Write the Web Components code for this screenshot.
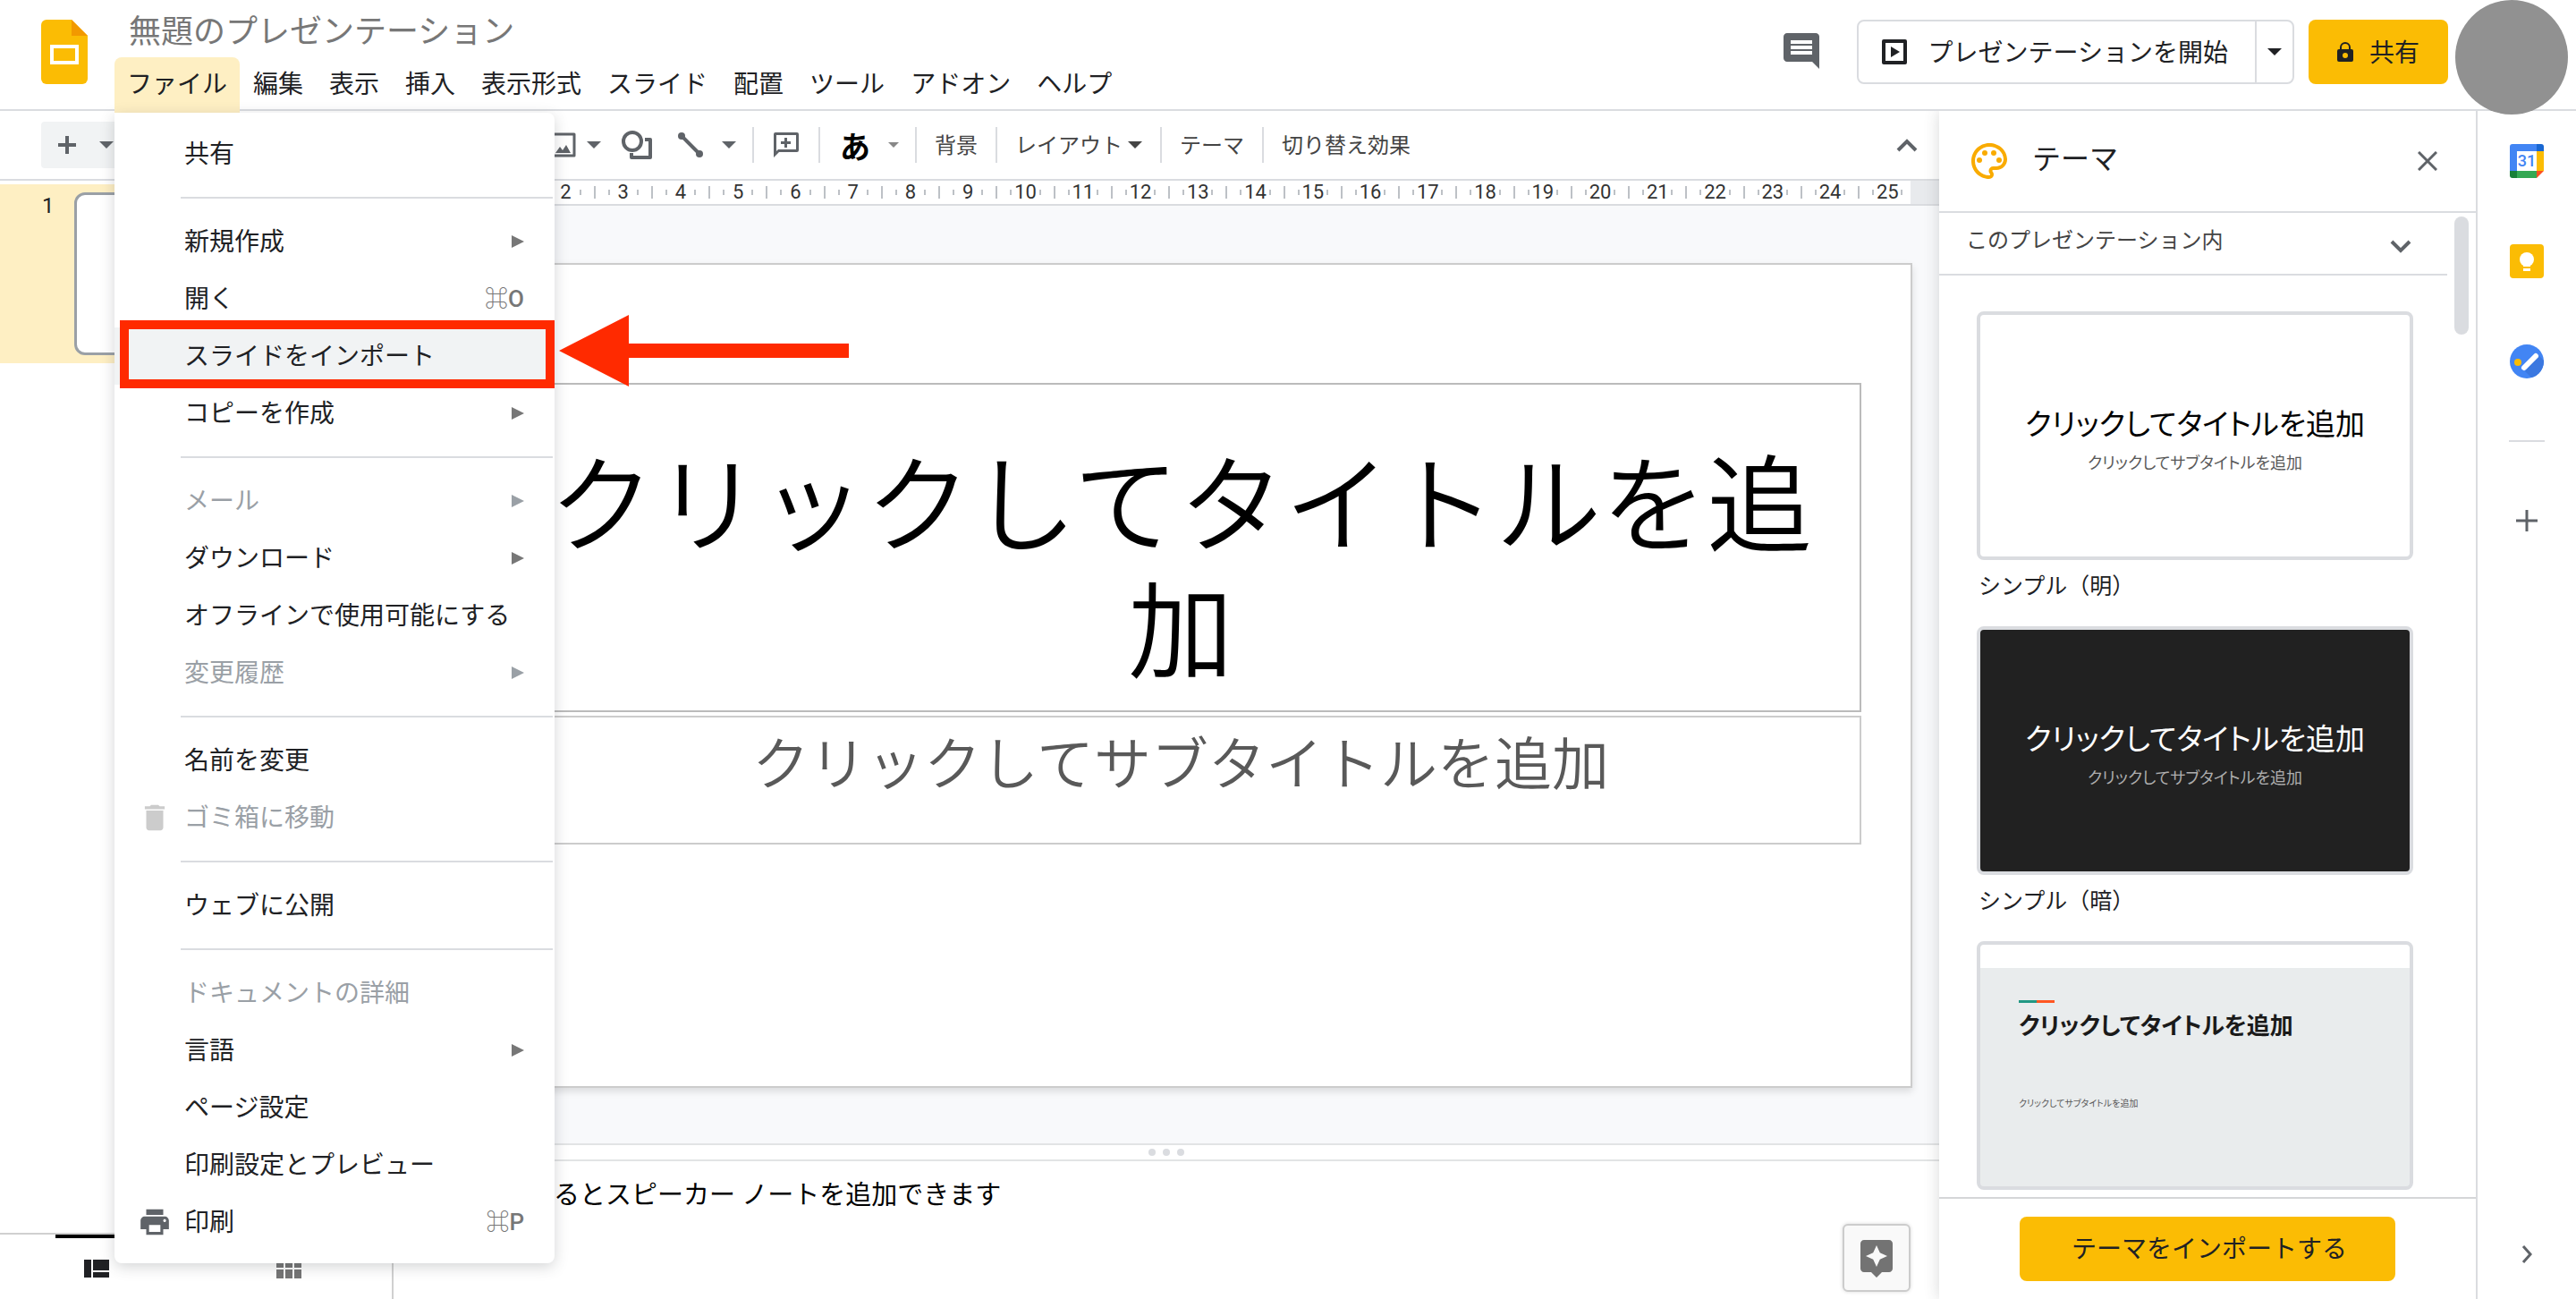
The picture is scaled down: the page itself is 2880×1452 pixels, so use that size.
<!DOCTYPE html>
<html lang="ja">
<head>
    <meta charset="utf-8">
    <meta name="viewport" content="width=device-width, initial-scale=1">
    <title>無題のプレゼンテーション</title>
    <style>
        body {
            margin: 0;
            font-family: Roboto, "Noto Sans CJK JP", sans-serif;
            font-size: 28px;
            color: #202124;
            background: #fff;
        }
    </style>
</head>
<body>
    <slides-app></slides-app>

    <script>
        const ICONS = {
            logo: ['0 0 52 72', '<path fill="#fbbc04" d="M6 0h28l18 18v48a6 6 0 0 1-6 6H6a6 6 0 0 1-6-6V6a6 6 0 0 1 6-6z"/><path fill="#f29900" d="M34 0l18 18H34z"/><path fill="none" stroke="#fff" stroke-width="4" d="M12 30h28v18H12z"/>'],
            comment: ['0 0 24 24', '<path d="M20 2H4c-1.1 0-2 .9-2 2v12c0 1.1.9 2 2 2h14l4 4V4c0-1.1-.9-2-2-2zm-2 12H6v-2h12v2zm0-3H6V9h12v2zm0-3H6V6h12v2z"/>'],
            present: ['0 0 28 28', '<path fill="none" stroke="currentColor" stroke-width="4" stroke-linejoin="round" d="M2 2h24v24H2z"/><path d="M10 8l10 6-10 6z"/>'],
            lock: ['0 0 18 22', '<path fill="none" stroke="currentColor" stroke-width="2" d="M4 9V6a5 5 0 0 1 10 0v3"/><path fill-rule="evenodd" d="M2 8h14a2 2 0 0 1 2 2v10a2 2 0 0 1-2 2H2a2 2 0 0 1-2-2V10a2 2 0 0 1 2-2zm7 4a3 3 0 1 0 0 6 3 3 0 0 0 0-6z"/>'],
            palette: ['0 0 24 24', '<path d="M12 22C6.49 22 2 17.51 2 12S6.49 2 12 2s10 4.04 10 9c0 3.31-2.69 6-6 6h-1.77c-.28 0-.5.22-.5.5 0 .12.05.23.13.33.41.47.64 1.06.64 1.67A2.5 2.5 0 0 1 12 22zm0-18c-4.41 0-8 3.59-8 8s3.59 8 8 8c.28 0 .5-.22.5-.5a.54.54 0 0 0-.14-.35c-.41-.46-.63-1.05-.63-1.65a2.5 2.5 0 0 1 2.5-2.5H16c2.21 0 4-1.79 4-4 0-3.86-3.59-7-8-7z"/><circle cx="6.5" cy="11.5" r="1.5"/><circle cx="9.5" cy="7.5" r="1.5"/><circle cx="14.5" cy="7.5" r="1.5"/><circle cx="17.5" cy="11.5" r="1.5"/>'],
            trash: ['0 0 24 24', '<path d="M6 19c0 1.1.9 2 2 2h8c1.1 0 2-.9 2-2V7H6v12zM19 4h-3.5l-1-1h-5l-1 1H5v2h14V4z"/>'],
            print: ['0 0 24 24', '<path d="M19 8H5c-1.66 0-3 1.34-3 3v6h4v4h12v-4h4v-6c0-1.66-1.34-3-3-3zm-3 11H8v-5h8v5zm3-7c-.55 0-1-.45-1-1s.45-1 1-1 1 .45 1 1-.45 1-1 1zm-1-9H6v4h12V3z"/>'],
            explore: ['0 0 24 24', '<path d="M19 2H5c-1.1 0-2 .9-2 2v14c0 1.1.9 2 2 2h4l3 3 3-3h4c1.1 0 2-.9 2-2V4c0-1.1-.9-2-2-2zm-5.12 10.88L12 17l-1.88-4.12L6 11l4.12-1.88L12 5l1.88 4.12L18 11l-4.12 1.88z"/>'],
            plus: ['0 0 20 20', '<path d="M8 0h4v8h8v4h-8v8H8v-8H0V8h8z"/>'],
            thinPlus: ['0 0 24 24', '<path fill="none" stroke="currentColor" stroke-width="3" d="M12 0v24M0 12h24"/>'],
            down: ['0 0 16 8', '<path d="M0 0h16L8 8z"/>'],
            right: ['0 0 14 14', '<path d="M0 0l14 7-14 7z"/>'],
            image: ['0 0 28 28', '<path fill="none" stroke="currentColor" stroke-width="3" stroke-linejoin="round" d="M2 2h24v24H2z"/><path d="M5 23l5-7 3 4 4-6 5 9z"/>'],
            shapes: ['0 0 34 32', '<circle cx="12" cy="12" r="10" fill="none" stroke="currentColor" stroke-width="4"/><path d="M26 8h6q2 0 2 2v20q0 2-2 2H11q-2 0-2-2v-5h4v3h17V12h-4z"/>'],
            line: ['0 0 30 28', '<circle cx="5" cy="4" r="4"/><circle cx="25" cy="24" r="4"/><path stroke="currentColor" stroke-width="4" d="M5 4l20 20"/>'],
            addComment: ['0 0 28 28', '<path fill-rule="evenodd" d="M2 0h24q2 0 2 2v18q0 2-2 2H6l-6 6V2q0-2 2-2zm1 3v18l2-2h20V3z"/><path d="M12 6h3v4h4v3h-4v4h-3v-4H8v-3h4z"/>'],
            chevronUp: ['0 0 24 16', '<path fill="none" stroke="currentColor" stroke-width="4" d="M2 14L12 4l10 10"/>'],
            chevronDown: ['0 0 24 16', '<path fill="none" stroke="currentColor" stroke-width="4" d="M2 2l10 10L22 2"/>'],
            chevronRight: ['0 0 12 20', '<path fill="none" stroke="currentColor" stroke-width="3" d="M2 1l8 9-8 9"/>'],
            close: ['0 0 22 22', '<path fill="none" stroke="currentColor" stroke-width="3" d="M1 1l20 20M21 1L1 21"/>'],
            filmstrip: ['0 0 28 20', '<path d="M0 0h8v20H0zM10 0h18v12H10zM10 14h18v6H10z"/>'],
            grid: ['0 0 28 22', '<path d="M0 0h8v10H0zM10 0h8v10h-8zM20 0h8v10h-8zM0 12h8v10H0zM10 12h8v10h-8zM20 12h8v10h-8z"/>'],
            calendar: ['0 0 38 38', '<path fill="#4285f4" d="M3 0h27v8H8v22H0V3a3 3 0 0 1 3-3z"/><path fill="#1967d2" d="M30 0h5a3 3 0 0 1 3 3v5h-8z"/><path fill="#fbbc04" d="M30 8h8v22h-8z"/><path fill="#34a853" d="M8 30h22v8H8z"/><path fill="#188038" d="M0 30h8v8H3a3 3 0 0 1-3-3z"/><path fill="#fc4f1f" d="M30 30h8l-8 8z"/>'],
            keep: ['0 0 38 38', '<rect width="38" height="38" rx="4" fill="#fbbc04"/><circle cx="19" cy="17" r="8" fill="#fff"/><path fill="#fff" d="M15 22h8v3h-8zM15 27h8v3h-8z"/>'],
            tasks: ['0 0 38 38', '<circle cx="19" cy="19" r="19" fill="#4285f4"/><path fill="#3b78e0" d="M17 30L32 12l6 6a19 19 0 0 1-14 19z"/><circle cx="9" cy="20" r="4" fill="#fbbc04"/><path stroke="#fff" stroke-width="6" stroke-linecap="round" d="M16 26l13-13"/>']
        };

        class AppIcon extends HTMLElement {
            connectedCallback() {
                this.attachShadow({ mode: 'open' });
                const [box, body] = ICONS[this.getAttribute('name')];
                const w = this.getAttribute('w');
                const h = this.getAttribute('h') ?? w;
                this.shadowRoot.innerHTML = `
                    <style>
                        :host { display: inline-flex; flex: none; }
                        svg { display: block; fill: currentColor; }
                    </style>
                    <svg width="${w}" height="${h}" viewBox="${box}" aria-hidden="true">${body}</svg>
                `;
            }
        }
        customElements.define('app-icon', AppIcon);

        // Rules shared by every shadow root
        const BASE = `
            * { box-sizing: border-box; }
            button {
                font: inherit; color: inherit; background: none;
                border: 0; margin: 0; padding: 0; cursor: pointer;
                display: inline-flex; align-items: center; justify-content: center;
                white-space: nowrap;
            }
            h1, h2, p { margin: 0; padding: 0; font-weight: inherit; font-size: inherit; }
        `;

        class MenuRow extends HTMLElement {
            connectedCallback() {
                this.attachShadow({ mode: 'open' });
                const icon = this.getAttribute('icon');
                const key = this.getAttribute('key');
                const off = this.hasAttribute('off');
                this.shadowRoot.innerHTML = `
                    <style>
                        ${BASE}
                        :host { display: block; }
                        button {
                            width: 100%; height: 64px; line-height: 40px;
                            display: grid; grid-template-columns: 38px 1fr auto;
                            column-gap: 14px; padding: 0 34px 0 26px;
                            text-align: left; color: #202124;
                        }
                        :host([off]) button { color: #9aa0a6; }
                        :host([active]) button { background: #f1f3f4; }
                        :host([marked]) { position: relative; }
                        :host([marked])::after {
                            content: ""; position: absolute; inset: -8px 0 -4px 6px;
                            border: 10px solid #ff2a00;
                        }
                        .lead { display: flex; color: #5f6368; }
                        :host([off]) .lead { color: #ccc; }
                        .label { padding-top: 2px; }
                        .tail { display: flex; color: #777; font-weight: 500; font-size: 26px; }
                        :host([off]) .tail { color: #9aa0a6; }
                    </style>
                    <button type="button" role="menuitem" ${off ? 'disabled' : ''}>
                        <span class="lead">${icon ? `<app-icon name="${icon}" w="38"></app-icon>` : ''}</span>
                        <span class="label"><slot></slot></span>
                        <span class="tail">${key ?? ''}${this.hasAttribute('sub') ? '<app-icon name="right" w="14"></app-icon>' : ''}</span>
                    </button>
                `;
            }
        }
        customElements.define('menu-row', MenuRow);

        class FileMenu extends HTMLElement {
            connectedCallback() {
                this.attachShadow({ mode: 'open' });
                this.shadowRoot.innerHTML = `
                    <style>
                        ${BASE}
                        :host {
                            display: block; width: 492px; padding: 14px 0;
                            background: #fff; border-radius: 0 8px 8px 8px;
                            box-shadow: 0 4px 16px rgba(60, 64, 67, .22);
                        }
                        hr { margin: 16px 2px 16px 74px; border: 0; height: 2px; background: #dadce0; }
                    </style>
                    <menu-row>共有</menu-row>
                    <hr>
                    <menu-row sub>新規作成</menu-row>
                    <menu-row key="⌘O">開く</menu-row>
                    <menu-row active marked>スライドをインポート</menu-row>
                    <menu-row sub>コピーを作成</menu-row>
                    <hr>
                    <menu-row sub off>メール</menu-row>
                    <menu-row sub>ダウンロード</menu-row>
                    <menu-row>オフラインで使用可能にする</menu-row>
                    <menu-row sub off>変更履歴</menu-row>
                    <hr>
                    <menu-row>名前を変更</menu-row>
                    <menu-row icon="trash" off>ゴミ箱に移動</menu-row>
                    <hr>
                    <menu-row>ウェブに公開</menu-row>
                    <hr>
                    <menu-row off>ドキュメントの詳細</menu-row>
                    <menu-row sub>言語</menu-row>
                    <menu-row>ページ設定</menu-row>
                    <menu-row>印刷設定とプレビュー</menu-row>
                    <menu-row icon="print" key="⌘P">印刷</menu-row>
                `;
            }
        }
        customElements.define('file-menu', FileMenu);

        class MenuBar extends HTMLElement {
            connectedCallback() {
                this.attachShadow({ mode: 'open' });
                const items = ['編集', '表示', '挿入', '表示形式', 'スライド', '配置', 'ツール', 'アドオン', 'ヘルプ'];
                this.shadowRoot.innerHTML = `
                    <style>
                        ${BASE}
                        :host { display: flex; height: 62px; gap: 1px; }
                        button { padding: 0 14px; height: 100%; line-height: 40px; }
                        .open { position: relative; z-index: 10; }
                        .open > button { background: #feefc3; border-radius: 8px 8px 0 0; }
                        file-menu { position: absolute; left: 0; top: 100%; }
                        .arrow { position: absolute; left: 497px; top: 288px; }
                    </style>
                    <div class="open">
                        <button type="button" aria-expanded="true">ファイル</button>
                        <file-menu role="menu"></file-menu>
                        <svg class="arrow" width="324" height="80" viewBox="0 0 324 80" aria-hidden="true">
                            <path fill="#ff2a00" d="M0 40L78 0v32h246v16H78v32z"/>
                        </svg>
                    </div>
                    ${items.map(t => `<button type="button">${t}</button>`).join('')}
                `;
            }
        }
        customElements.define('menu-bar', MenuBar);

        class AppHeader extends HTMLElement {
            connectedCallback() {
                this.attachShadow({ mode: 'open' });
                this.shadowRoot.innerHTML = `
                    <style>
                        ${BASE}
                        :host {
                            display: flex; align-items: flex-start; height: 124px;
                            border-bottom: 2px solid #dadce0;
                        }
                        .logo { padding: 22px 30px 0 46px; }
                        .doc { flex: 1; min-width: 0; }
                        input {
                            display: block; font: inherit; font-size: 36px; color: #777;
                            border: 0; outline: 0; background: none;
                            width: 640px; height: 64px; line-height: 52px; padding: 0 0 0 16px;
                        }
                        .right { display: flex; align-items: flex-start; }
                        .right > button { margin-top: 22px; height: 72px; }
                        .comment { color: #5f6368; width: 48px; margin-right: 38px; }
                        .comment app-icon { padding-bottom: 2px; }
                        .split {
                            display: flex; margin: 22px 16px 0 0; height: 72px;
                            border: 2px solid #dadce0; border-radius: 8px;
                        }
                        .start { gap: 24px; padding: 0 30px 0 26px; }
                        .start span, .share span { padding-bottom: 2px; }
                        .pick { width: 42px; border-left: 2px solid #dadce0; }
                        .right > .share { background: #fbbc04; border-radius: 8px; gap: 18px; width: 156px; margin-right: 8px; }
                        .avatar {
                            width: 126px; height: 128px; border-radius: 50%;
                            background: #919191; margin: 0 9px -6px 0; position: relative; z-index: 1;
                        }
                    </style>
                    <div class="logo"><app-icon name="logo" w="52" h="72"></app-icon></div>
                    <div class="doc">
                        <input type="text" aria-label="名前" value="無題のプレゼンテーション">
                        <menu-bar></menu-bar>
                    </div>
                    <div class="right">
                        <button type="button" class="comment" aria-label="コメント"><app-icon name="comment" w="48"></app-icon></button>
                        <div class="split">
                            <button type="button" class="start"><app-icon name="present" w="28"></app-icon><span>プレゼンテーションを開始</span></button>
                            <button type="button" class="pick" aria-label="その他"><app-icon name="down" w="16" h="8"></app-icon></button>
                        </div>
                        <button type="button" class="share"><app-icon name="lock" w="18" h="22"></app-icon><span>共有</span></button>
                        <div class="avatar"></div>
                    </div>
                `;
            }
        }
        customElements.define('app-header', AppHeader);

        class ToolBar extends HTMLElement {
            connectedCallback() {
                this.attachShadow({ mode: 'open' });
                this.shadowRoot.innerHTML = `
                    <style>
                        ${BASE}
                        :host {
                            display: flex; align-items: center; height: 78px;
                            padding: 0 24px 0 46px; border-bottom: 2px solid #dadce0;
                            color: #5f6368; font-size: 24px;
                        }
                        button { height: 52px; }
                        .new { background: #f1f3f4; border-radius: 4px; gap: 26px; padding: 0 18px; width: 100px; }
                        .image { margin-left: 470px; gap: 12px; }
                        .shapes { margin-left: 23px; }
                        .line { margin: 0 18px 0 28px; gap: 20px; }
                        .note { margin: 0 22px; }
                        .sep { width: 2px; height: 40px; background: #dadce0; flex: none; }
                        .ime { color: #000; font-size: 34px; font-weight: 700; gap: 20px; margin: 0 18px 0 22px; }
                        .ime app-icon { color: #888; }
                        .text { color: #444; padding: 0 20px; gap: 6px; }
                        .text span { padding-bottom: 4px; }
                        .push { margin-left: auto; }
                    </style>
                    <button type="button" class="new" aria-label="新しいスライド"><app-icon name="plus" w="20"></app-icon><app-icon name="down" w="16" h="8"></app-icon></button>
                    <button type="button" class="image" aria-label="画像"><app-icon name="image" w="28"></app-icon><app-icon name="down" w="16" h="8"></app-icon></button>
                    <button type="button" class="shapes" aria-label="図形"><app-icon name="shapes" w="34" h="32"></app-icon></button>
                    <button type="button" class="line" aria-label="線"><app-icon name="line" w="30" h="28"></app-icon><app-icon name="down" w="16" h="8"></app-icon></button>
                    <span class="sep"></span>
                    <button type="button" class="note" aria-label="コメントを追加"><app-icon name="addComment" w="28"></app-icon></button>
                    <span class="sep"></span>
                    <button type="button" class="ime">あ<app-icon name="down" w="12" h="6"></app-icon></button>
                    <span class="sep"></span>
                    <button type="button" class="text"><span>背景</span></button>
                    <span class="sep"></span>
                    <button type="button" class="text"><span>レイアウト</span><app-icon name="down" w="16" h="8"></app-icon></button>
                    <span class="sep"></span>
                    <button type="button" class="text"><span>テーマ</span></button>
                    <span class="sep"></span>
                    <button type="button" class="text"><span>切り替え効果</span></button>
                    <button type="button" class="push" aria-label="メニューを非表示"><app-icon name="chevronUp" w="24" h="16"></app-icon></button>
                `;
            }
        }
        customElements.define('tool-bar', ToolBar);

        class FilmStrip extends HTMLElement {
            connectedCallback() {
                this.attachShadow({ mode: 'open' });
                this.shadowRoot.innerHTML = `
                    <style>
                        ${BASE}
                        :host { display: flex; flex-direction: column; width: 440px; border-right: 2px solid #d0d0d0; }
                        .list { flex: 1; padding-top: 4px; }
                        .item { display: flex; gap: 24px; height: 200px; padding: 9px 30px 9px 47px; background: #feefc3; font-size: 24px; line-height: 30px; }
                        .item span { width: 12px; }
                        .thumb { flex: 1; background: #fff; border: 3px solid #9aa0a6; border-radius: 12px; }
                        .views { display: flex; height: 74px; padding-right: 8px; border-top: 2px solid #d0d0d0; }
                        .views div { flex: 1; display: flex; justify-content: center; }
                        .views button { width: 92px; border-top: 4px solid transparent; color: #757575; }
                        .views button.on { border-color: #000; color: #202124; }
                    </style>
                    <div class="list">
                        <div class="item"><span>1</span><div class="thumb"></div></div>
                    </div>
                    <div class="views">
                        <div><button type="button" class="on" aria-label="フィルムストリップ表示"><app-icon name="filmstrip" w="28" h="20"></app-icon></button></div>
                        <div><button type="button" aria-label="グリッド表示"><app-icon name="grid" w="28" h="22"></app-icon></button></div>
                    </div>
                `;
            }
        }
        customElements.define('film-strip', FilmStrip);

        class SlideRuler extends HTMLElement {
            connectedCallback() {
                this.attachShadow({ mode: 'open' });
                let cells = '';
                for (let n = 1; n <= 25; n++) {
                    cells += `<div class="cm"><i class="half"></i><i></i><span>${n}</span><i></i></div>`;
                }
                this.shadowRoot.innerHTML = `
                    <style>
                        ${BASE}
                        :host {
                            display: block; height: 28px; padding: 0 32px 0 64px;
                            background: #e8eaed; border-bottom: 2px solid #dadce0;
                            font-size: 22px; line-height: 26px; color: #333;
                        }
                        /* a cell runs from 5/8 cm before its number to 3/8 cm after it */
                        .scale {
                            display: grid; height: 26px; background: #fff; align-items: center;
                            grid-template-columns: 15fr repeat(25, 40fr) 1fr;
                        }
                        .cm { display: grid; grid-template-columns: repeat(4, minmax(0, 1fr)); align-items: center; min-width: 0; }
                        i { width: 2px; height: 6px; background: #bdc1c6; justify-self: center; }
                        i.half { height: 14px; }
                        span { display: flex; justify-content: center; }
                    </style>
                    <div class="scale"><b></b>${cells}</div>
                `;
            }
        }
        customElements.define('slide-ruler', SlideRuler);

        class SlideCanvas extends HTMLElement {
            connectedCallback() {
                this.attachShadow({ mode: 'open' });
                this.shadowRoot.innerHTML = `
                    <style>
                        ${BASE}
                        :host { display: block; background: #f8f9fb; padding: 64px 30px 0 62px; overflow: hidden; color: #000; }
                        .slide {
                            aspect-ratio: 1636 / 922; background: #fff; border: 2px solid #ccc;
                            box-shadow: 0 4px 8px rgba(0, 0, 0, .12); padding: 132px 55px 0;
                            display: flex; flex-direction: column; gap: 4px; text-align: center;
                        }
                        .title, .subtitle { border: 2px solid #bbb; }
                        .title { height: 368px; display: flex; flex-direction: column; justify-content: flex-end; padding: 0 20px 14px; font-size: 118px; line-height: 141px; font-weight: 350; }
                        .subtitle { height: 144px; padding: 12px 20px; font-size: 64px; line-height: 84px; color: #595959; border-color: #ccc; font-weight: 350; }
                    </style>
                    <div class="slide">
                        <h1 class="title">クリックしてタイトルを追加</h1>
                        <p class="subtitle">クリックしてサブタイトルを追加</p>
                    </div>
                `;
            }
        }
        customElements.define('slide-canvas', SlideCanvas);

        class SpeakerNotes extends HTMLElement {
            connectedCallback() {
                this.attachShadow({ mode: 'open' });
                this.shadowRoot.innerHTML = `
                    <style>
                        ${BASE}
                        :host { display: flex; flex-direction: column; height: 174px; color: #000; }
                        .grip { height: 20px; border: solid #e2e4e5; border-width: 2px 0; display: flex; gap: 8px; align-items: center; justify-content: center; }
                        .grip i { width: 8px; height: 8px; border-radius: 50%; background: #dadce0; }
                        .row { flex: 1; display: flex; justify-content: space-between; align-items: flex-start; padding: 0 32px 0 34px; }
                        p { font-size: 29px; line-height: 40px; padding-top: 18px; }
                        button { width: 76px; height: 76px; margin-top: 70px; background: #f9f9f9; border: 2px solid #ccc; border-radius: 6px; color: #737373; box-shadow: 0 0 4px rgba(0, 0, 0, .15); }
                    </style>
                    <div class="grip"><i></i><i></i><i></i></div>
                    <div class="row">
                        <p>クリックするとスピーカー ノートを追加できます</p>
                        <button type="button" aria-label="データ探索"><app-icon name="explore" w="48"></app-icon></button>
                    </div>
                `;
            }
        }
        customElements.define('speaker-notes', SpeakerNotes);

        class ThemeCard extends HTMLElement {
            connectedCallback() {
                this.attachShadow({ mode: 'open' });
                this.shadowRoot.innerHTML = `
                    <style>
                        ${BASE}
                        :host { display: block; font-size: 25px; line-height: 36px; }
                        button {
                            width: 100%; height: 278px; border: 4px solid #dadce0; border-radius: 8px;
                            flex-direction: column; color: #000; background: #fff;
                            font-feature-settings: "palt"; padding-top: 14px;
                        }
                        .t { font-size: 33px; line-height: 48px; }
                        .s { font-size: 18px; line-height: 38px; color: #595959; }
                        .name { padding: 12px 2px 0; }
                        .bar { display: none; }
                        :host([look="dark"]) button { background: #212121; color: #fff; }
                        :host([look="dark"]) .s { color: #adadad; }
                        :host([look="streamline"]) button {
                            background: linear-gradient(#fff 26px, #e9eced 26px);
                            align-items: flex-start; justify-content: flex-start; padding: 62px 43px 0; color: #1a1a1a;
                        }
                        :host([look="streamline"]) .bar { display: block; width: 40px; height: 3px; background: linear-gradient(90deg, #219883 50%, #ff5722 50%); }
                        :host([look="streamline"]) .t { font-size: 26px; font-weight: 700; padding-top: 2px; }
                        :host([look="streamline"]) .s { font-size: 10px; padding-top: 44px; }
                    </style>
                    <button type="button">
                        <span class="bar"></span>
                        <span class="t">クリックしてタイトルを追加</span>
                        <span class="s">クリックしてサブタイトルを追加</span>
                    </button>
                    <div class="name"><slot></slot></div>
                `;
            }
        }
        customElements.define('theme-card', ThemeCard);

        class ThemePanel extends HTMLElement {
            connectedCallback() {
                this.attachShadow({ mode: 'open' });
                this.shadowRoot.innerHTML = `
                    <style>
                        ${BASE}
                        :host {
                            display: flex; flex-direction: column; width: 602px; min-height: 0;
                            background: #fff; border-right: 2px solid #dadce0;
                            box-shadow: 0 0 16px rgba(60, 64, 67, .2); clip-path: inset(0 0 0 -20px);
                            position: relative;
                        }
                        header { display: flex; align-items: center; height: 114px; padding: 0 43px 0 32px; border-bottom: 2px solid #dadce0; }
                        header app-icon { color: #f9ab00; }
                        header h2 { flex: 1; font-size: 32px; line-height: 44px; padding: 0 0 4px 24px; }
                        header button app-icon { color: #5f6368; }
                        .body { flex: 1; min-height: 0; display: flex; overflow: hidden; }
                        .scroll { flex: 1; }
                        .track { width: 32px; padding: 4px 8px; }
                        .thumb { height: 132px; border-radius: 8px; background: #dadce0; }
                        .group { width: 100%; height: 70px; justify-content: space-between; padding: 0 40px 0 30px; border-bottom: 2px solid #dadce0; font-size: 24px; color: #444; }
                        .group app-icon { padding-top: 8px; color: #5f6368; }
                        .group span { padding-bottom: 12px; }
                        .cards { display: flex; flex-direction: column; gap: 26px; padding: 40px 38px 0 42px; }
                        footer { border-top: 2px solid #d5d6d8; padding: 20px 90px; height: 114px; }
                        footer button { width: 100%; height: 72px; background: #fbbc04; border-radius: 8px; }
                        footer span { padding: 0 0 4px 4px; }
                    </style>
                    <header>
                        <app-icon name="palette" w="48"></app-icon>
                        <h2>テーマ</h2>
                        <button type="button" aria-label="閉じる"><app-icon name="close" w="22"></app-icon></button>
                    </header>
                    <div class="body">
                        <div class="scroll">
                            <button type="button" class="group"><span>このプレゼンテーション内</span><app-icon name="chevronDown" w="24" h="16"></app-icon></button>
                            <div class="cards">
                                <theme-card>シンプル（明）</theme-card>
                                <theme-card look="dark">シンプル（暗）</theme-card>
                                <theme-card look="streamline"></theme-card>
                            </div>
                        </div>
                        <div class="track"><div class="thumb"></div></div>
                    </div>
                    <footer><button type="button"><span>テーマをインポートする</span></button></footer>
                `;
            }
        }
        customElements.define('theme-panel', ThemePanel);

        class SideRail extends HTMLElement {
            connectedCallback() {
                this.attachShadow({ mode: 'open' });
                this.shadowRoot.innerHTML = `
                    <style>
                        ${BASE}
                        :host { display: flex; flex-direction: column; align-items: center; width: 110px; padding: 37px 0 40px; color: #5f6368; }
                        .apps { display: flex; flex-direction: column; gap: 74px; }
                        .cal { display: grid; place-items: center; }
                        .cal > * { grid-area: 1 / 1; }
                        .cal span { color: #4285f4; font-size: 18px; font-weight: 500; line-height: 20px; }
                        hr { width: 40px; height: 2px; background: #dadce0; border: 0; margin: 69px 0 76px; }
                        .hide { margin-top: auto; }
                    </style>
                    <div class="apps">
                        <button type="button" class="cal" aria-label="カレンダー"><app-icon name="calendar" w="38"></app-icon><span>31</span></button>
                        <button type="button" aria-label="Keep"><app-icon name="keep" w="38"></app-icon></button>
                        <button type="button" aria-label="ToDo リスト"><app-icon name="tasks" w="38"></app-icon></button>
                    </div>
                    <hr>
                    <button type="button" aria-label="アドオンを取得"><app-icon name="thinPlus" w="24"></app-icon></button>
                    <button type="button" class="hide" aria-label="サイドパネルを非表示"><app-icon name="chevronRight" w="12" h="20"></app-icon></button>
                `;
            }
        }
        customElements.define('side-rail', SideRail);

        class SlidesApp extends HTMLElement {
            connectedCallback() {
                this.attachShadow({ mode: 'open' });
                this.shadowRoot.innerHTML = `
                    <style>
                        ${BASE}
                        :host { display: flex; flex-direction: column; height: 100vh; overflow: hidden; }
                        app-header { position: relative; z-index: 5; }
                        main { flex: 1; min-height: 0; display: grid; grid-template-columns: minmax(0, 1fr) auto auto; }
                        .editor { display: flex; flex-direction: column; min-height: 0; }
                        .work { flex: 1; display: flex; min-height: 0; }
                        .stage { flex: 1; min-width: 0; display: flex; flex-direction: column; }
                        slide-canvas { flex: 1; min-height: 0; }
                    </style>
                    <app-header></app-header>
                    <main>
                        <div class="editor">
                            <tool-bar></tool-bar>
                            <div class="work">
                                <film-strip></film-strip>
                                <div class="stage">
                                    <slide-ruler></slide-ruler>
                                    <slide-canvas></slide-canvas>
                                    <speaker-notes></speaker-notes>
                                </div>
                            </div>
                        </div>
                        <theme-panel></theme-panel>
                        <side-rail></side-rail>
                    </main>
                `;
            }
        }
        customElements.define('slides-app', SlidesApp);
    </script>
</body>
</html>
